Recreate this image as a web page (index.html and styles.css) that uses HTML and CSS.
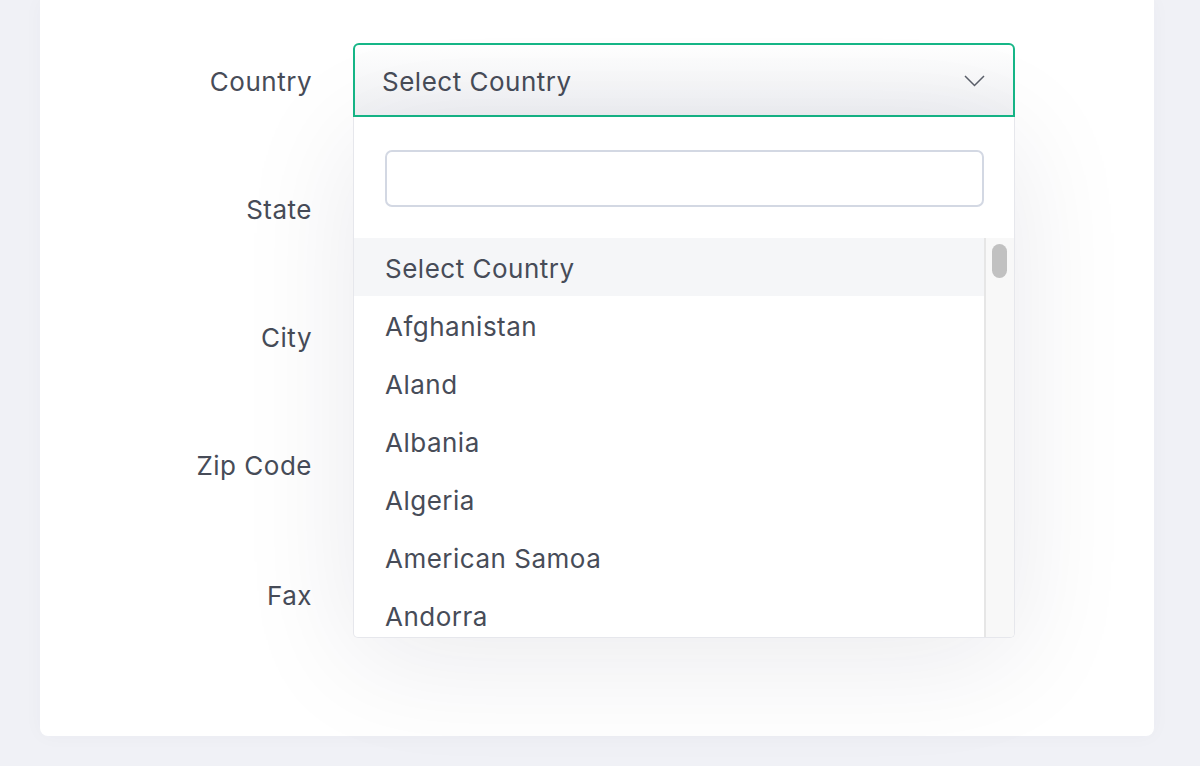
FILE: index.html
```html
<!DOCTYPE html>
<html lang="en">
<head>
    <meta charset="UTF-8">
    <meta name="viewport" content="width=device-width, initial-scale=1.0">
    <title>Address Form</title>
    <link rel="stylesheet" href="styles.css">
</head>
<body>
    <div class="card">
        <form class="form">
            <div class="row">
                <label class="label">Country</label>
                <div class="field">
                    <div class="select open">
                        <span>Select Country</span>
                        <svg class="chevron" width="21" height="12" viewBox="0 0 21 12"><path d="M1 1 L10.5 10.5 L20 1" fill="none" stroke="#5a5f6a" stroke-width="1.5"/></svg>
                    </div>
                    <div class="dropdown">
                        <div class="search-wrap">
                            <input class="search" type="text">
                        </div>
                        <div class="list">
                            <ul class="options" id="options">
                                <li class="option active">Select Country</li>
                            </ul>
                            <div class="scrollbar"><div class="thumb"></div></div>
                        </div>
                    </div>
                </div>
            </div>
            <div class="row">
                <label class="label">State</label>
                <div class="field"><input class="input" type="text"></div>
            </div>
            <div class="row">
                <label class="label">City</label>
                <div class="field"><input class="input" type="text"></div>
            </div>
            <div class="row">
                <label class="label">Zip Code</label>
                <div class="field"><input class="input" type="text"></div>
            </div>
            <div class="row row-last">
                <label class="label">Fax</label>
                <div class="field"><input class="input" type="text"></div>
            </div>
        </form>
    </div>

    <script>
        // only the rows that fit in the open list
        const countries = ['Afghanistan', 'Aland', 'Albania', 'Algeria', 'American Samoa', 'Andorra'];

        const list = document.getElementById('options');
        countries.forEach(function (name) {
            const li = document.createElement('li');
            li.className = 'option';
            li.textContent = name;
            list.appendChild(li);
        });
    </script>
</body>
</html>
```

FILE: styles.css
```css
* {
    box-sizing: border-box;
}
body {
    margin: 0;
    padding: 0 46px 30px 40px;
    background-color: #f0f1f6;
    font-family: Inter, "Noto Sans", sans-serif;
    color: #474c58;
}
.card {
    background-color: #fff;
    border-radius: 0 0 8px 8px;
    padding: 43px 0 105px;
    box-shadow: 0 0 20px rgba(40, 45, 80, 0.03);
}
.form {
    display: flex;
    flex-direction: column;
    gap: 54px;
}
.row {
    display: grid;
    grid-template-columns: 272px 662px;
    column-gap: 41px;
    align-items: center;
    height: 74px;
}
.row-last {
    margin-top: 2px;
}
.label {
    text-align: right;
    font-size: 26px;
    letter-spacing: 0.5px;
    margin-top: 2px;
}
.field {
    position: relative;
    height: 74px;
}
.input {
    width: 100%;
    height: 74px;
    border: 2px solid #dfe2ea;
    border-radius: 6px;
}
.select {
    height: 74px;
    border: 2px solid #16b687;
    border-radius: 6px 6px 0 0;
    background: linear-gradient(#fff, #f0f1f4);
    display: flex;
    align-items: center;
    justify-content: space-between;
    padding: 2px 28px 0 27px;
    font-size: 26px;
    letter-spacing: 0.5px;
}
.dropdown {
    position: absolute;
    top: 74px;
    left: 0;
    width: 662px;
    height: 521px;
    background-color: #fff;
    border: 1px solid #e6e7ec;
    border-top: none;
    border-radius: 0 0 5px 5px;
    box-shadow: 0 20px 120px rgba(20, 25, 60, 0.09);
    z-index: 5;
    display: flex;
    flex-direction: column;
    overflow: hidden;
}
.search-wrap {
    padding: 33px 30px 31px 31px;
}
.search {
    display: block;
    width: 100%;
    height: 57px;
    border: 2px solid #d3d8e3;
    border-radius: 7px;
}
.list {
    flex: 1;
    display: flex;
    min-height: 0;
}
.options {
    list-style: none;
    margin: 0;
    padding: 0;
    flex: 1;
    overflow: hidden;
}
.option {
    height: 58px;
    line-height: 58px;
    padding: 2px 0 0 31px;
    font-size: 26px;
    letter-spacing: 0.5px;
    color: #474c58;
}
.option.active {
    background-color: #f5f6f8;
}
.scrollbar {
    width: 30px;
    background-color: #f8f8f8;
    border-left: 2px solid #e6e6e6;
    padding: 6px 7px 0 6px;
}
.thumb {
    height: 34px;
    background-color: #c1c1c1;
    border-radius: 8px;
}
```
